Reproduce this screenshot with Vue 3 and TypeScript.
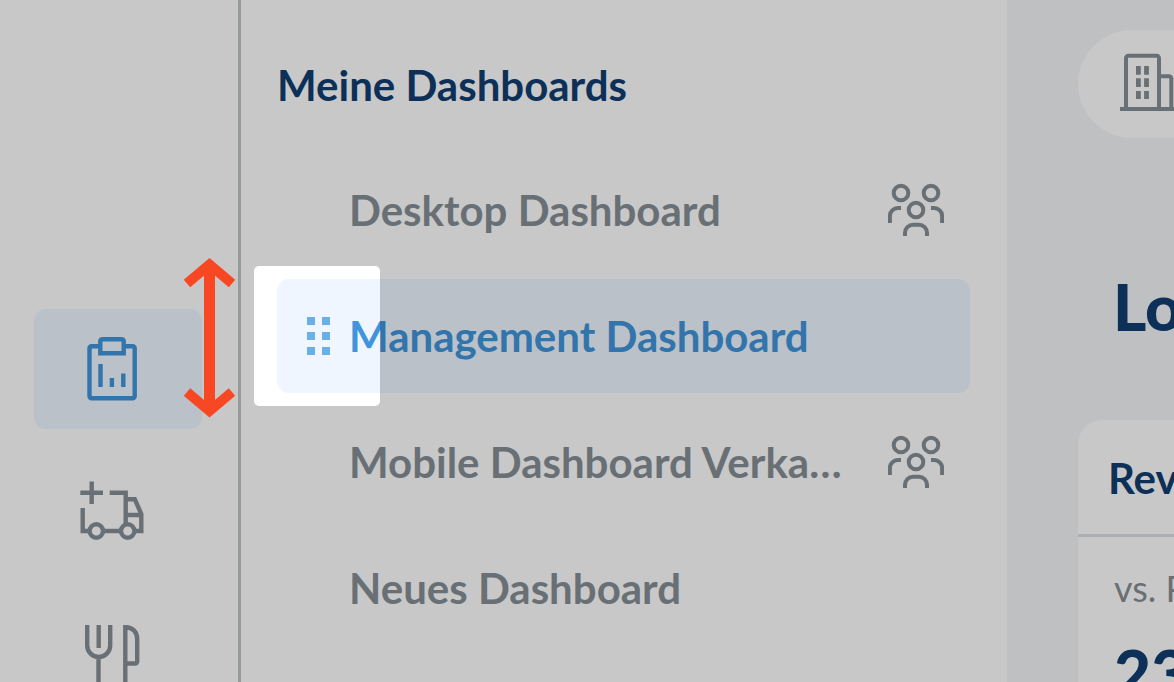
<script setup lang="ts">
interface Dashboard {
  name: string
  shared: boolean
  active: boolean
}

const dashboards: Dashboard[] = [
  { name: 'Desktop Dashboard', shared: true, active: false },
  { name: 'Management Dashboard', shared: false, active: true },
  { name: 'Mobile Dashboard Verka…', shared: true, active: false },
  { name: 'Neues Dashboard', shared: false, active: false },
]
</script>

<template>
  <div class="app">
    <nav class="rail" aria-label="Hauptnavigation">
      <a class="rail-item active" href="#dashboards" aria-label="Dashboards">
        <svg class="icon" viewBox="0 0 64 64">
          <path d="M20 9.300H11.500a2 2 0 0 0-2 2V59.300a2 2 0 0 0 2 2H52.700a2 2 0 0 0 2-2V11.300a2 2 0 0 0-2-2H44" />
          <path d="M20.300 16.300V4.300a2 2 0 0 1 2-2H41.700a2 2 0 0 1 2 2V16.300Z" />
          <path d="M20.500 27V50M31.900 41V50M43.300 36.500V50" />
        </svg>
      </a>
      <a class="rail-item" href="#lieferung" aria-label="Lieferung">
        <svg class="icon" viewBox="0 0 64 64">
          <path d="M11.700 2.500V25M.3 13.700H23M29.700 13.700H45.700V45M2.700 29V52H9M23 52H41" />
          <circle cx="16.300" cy="52" r="6.700" />
          <circle cx="47.700" cy="52" r="6.700" />
          <path d="M45.700 20.300H54.800L61.300 35V52H55M45.700 36H61" />
        </svg>
      </a>
      <a class="rail-item" href="#gastronomie" aria-label="Gastronomie">
        <svg class="icon" viewBox="0 0 64 64">
          <path d="M7.200 4V24.500a11.500 11.500 0 0 0 23 0V4M18.700 4V27M18.500 36V64" />
          <path d="M45.300 4V64M45.300 6.200C52.500 6 57.200 11 57.200 18V40.500a2 2 0 0 1-2 2H45.300" />
        </svg>
      </a>
    </nav>

    <aside class="panel">
      <h2>Meine Dashboards</h2>
      <ul>
        <li v-for="d in dashboards" :key="d.name" :class="['row', { active: d.active }]">
          <span class="lead">
            <button v-if="d.active" class="handle" type="button" aria-label="Verschieben">
              <i v-for="n in 6" :key="n"></i>
            </button>
          </span>
          <a href="#dashboard">{{ d.name }}</a>
          <svg v-if="d.shared" class="people" viewBox="0 0 56 56">
            <circle cx="13" cy="11" r="7.300" />
            <circle cx="43" cy="11" r="7.300" />
            <circle cx="28" cy="28" r="7.300" />
            <path d="M1.900 41V34a8 8 0 0 1 8-8H13M43 26H46.100a8 8 0 0 1 8 8V41" />
            <path d="M17 54V50.700a8 8 0 0 1 8-8H31a8 8 0 0 1 8 8V54" />
          </svg>
        </li>
      </ul>
    </aside>

    <main class="content">
      <button class="pill" type="button" aria-label="Standort">
        <svg class="building" viewBox="0 0 68 68">
          <path d="M2 59H68M8 59V8a2.300 2.300 0 0 1 2.300-2.300H38.700A2.300 2.300 0 0 1 41 8V59M41 26.300H51a2.300 2.300 0 0 1 2.300 2.300V59" />
          <path class="windows" d="M20.400 16V24.700M20.400 28.300V37M20.400 41V49M28.500 16V24.700M28.500 28.300V37M28.500 41V49" />
        </svg>
      </button>
      <h1>Lo</h1>
      <section class="card">
        <h3>Rev</h3>
        <p class="compare">vs. P</p>
        <p class="value">23</p>
      </section>
    </main>

    <div class="spotlight"></div>
    <svg class="arrow" viewBox="0 0 52 162">
      <path d="M25.500 10V151" stroke-width="11" />
      <path d="M3 26.500L25.500 7.500L48 26.500M3 135L25.500 154L48 135" stroke-width="10" />
    </svg>
  </div>
</template>

<style>
body {
  margin: 0;
}
</style>

<style scoped>
.app {
  position: relative;
  display: flex;
  height: 100vh;
  overflow: hidden;
  background: #fff;
  color: #878f96;
  font-family: Lato, "Liberation Sans", sans-serif;
}
h1, h2, h3, p, ul {
  margin: 0;
  padding: 0;
}
button {
  padding: 0;
  border: 0;
  background: none;
  color: inherit;
}
a {
  color: inherit;
  text-decoration: none;
}
svg {
  display: block;
  flex: none;
  fill: none;
  stroke: currentColor;
  stroke-width: 4.4;
}
.rail {
  display: flex;
  flex: none;
  flex-direction: column;
  gap: 22px;
  box-sizing: border-box;
  width: 241px;
  padding: 309px 36px 0 34px;
  border-right: 3px solid #bfc5c9;
}
.rail-item {
  display: flex;
  flex: none;
  align-items: center;
  justify-content: center;
  height: 120px;
  padding-right: 12px;
  border-radius: 12px;
}
.rail-item.active,
.row.active {
  background: #eff6ff;
  color: #4094dc;
}
.icon {
  width: 64px;
  height: 64px;
}
.panel {
  flex: none;
  box-sizing: border-box;
  width: 766px;
  padding: 57px 37px 0 36px;
}
h2, h3 {
  color: #103e70;
  font-size: 42px;
  font-weight: 700;
  line-height: 56px;
}
ul {
  display: grid;
  gap: 12px;
  margin-top: 40px;
  list-style: none;
}
.row {
  display: flex;
  align-items: center;
  box-sizing: border-box;
  height: 114px;
  padding-right: 26px;
  border-radius: 12px;
  font-size: 42px;
  font-weight: 700;
  line-height: 56px;
}
.row a {
  flex: 1;
  white-space: nowrap;
}
.lead {
  flex: none;
  box-sizing: border-box;
  width: 72px;
  padding-left: 30px;
}
.handle {
  display: grid;
  grid-template-columns: 8px 8px;
  gap: 7px;
  cursor: grab;
}
.handle i {
  width: 8px;
  height: 8px;
  background: #69b0e8;
}
.people {
  width: 56px;
  height: 56px;
  stroke-width: 4;
}
.content {
  flex: 1;
  min-width: 0;
  overflow: hidden;
  padding: 30px 0 0 71px;
  background: #f2f5f8;
}
.pill {
  display: flex;
  align-items: center;
  width: 100%;
  height: 108px;
  padding-left: 40px;
  overflow: hidden;
  border-radius: 54px 0 0 54px;
  background: #fff;
}
.building {
  width: 68px;
  height: 68px;
  stroke-width: 4;
}
.windows {
  stroke-width: 4.800;
}
h1 {
  margin: 129px 0 0 35px;
  color: #103e70;
  font-size: 64px;
  font-weight: 900;
  line-height: 80px;
}
.card {
  height: 400px;
  margin-top: 73px;
  overflow: hidden;
  border-radius: 24px 0 0 0;
  background: #fff;
}
.card h3 {
  padding: 30px 0 28px 30px;
  border-bottom: 3px solid #dbe0e4;
}
.compare {
  padding: 27px 0 0 36px;
  font-size: 36px;
  line-height: 48px;
  white-space: nowrap;
}
.value {
  padding: 21px 0 0 36px;
  color: #103e70;
  font-size: 64px;
  font-weight: 900;
  line-height: 80px;
}
/* Dims everything around the highlighted handle. */
.spotlight {
  position: absolute;
  top: 266px;
  left: 254px;
  width: 126px;
  height: 140px;
  border-radius: 5px;
  box-shadow: 0 0 0 2000px rgba(0, 0, 0, 0.216);
  pointer-events: none;
}
.arrow {
  position: absolute;
  top: 257px;
  left: 184px;
  width: 52px;
  height: 162px;
  color: #f74823;
}
</style>
